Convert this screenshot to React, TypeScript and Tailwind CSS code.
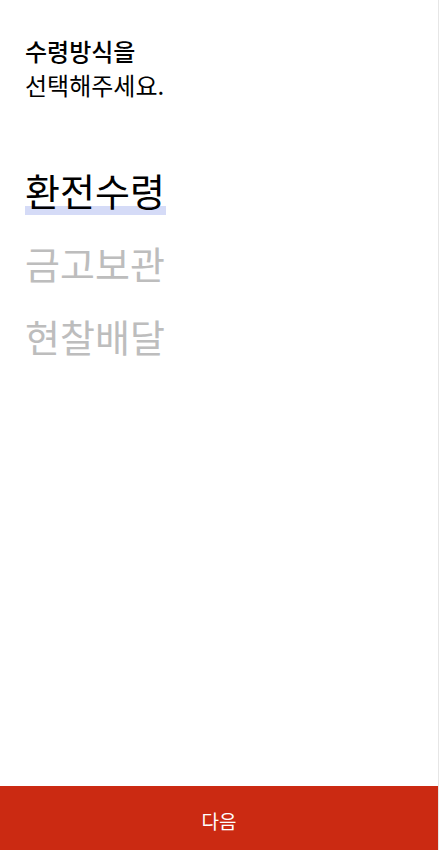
import React from "react";

export default function App() {
  const options = ["환전수령", "금고보관", "현찰배달"];
  return (
    <div
      className="flex h-[850px] w-full flex-col bg-white border-r border-[#e6e6e6]"
      style={{ fontFamily: '"Noto Sans CJK KR", "Noto Sans", sans-serif' }}
    >
      <div className="flex-1 px-[25px] pt-[34px]">
        <h1 className="text-[24px] leading-[34px] text-black">
          <span className="font-medium">수령방식을</span>
          <br />
          <span className="font-normal">선택해주세요.</span>
        </h1>
        <ul className="mt-[63px] flex flex-col gap-[23px]">
          {options.map((o, i) => (
            <li key={o}>
              <span className="relative inline-block text-[38px] leading-[50px]">
                {i === 0 && (
                  <span className="absolute left-0 right-[-1px] bottom-[0px] h-[9px] bg-[#d5dbf7]" />
                )}
                <span className={`relative ${i === 0 ? "text-black" : "text-[#bdbdbd]"}`}>{o}</span>
              </span>
            </li>
          ))}
        </ul>
      </div>
      <button className="h-[64px] w-full bg-[#cb2a12] pt-[7px] text-[19px] text-white">다음</button>
    </div>
  );
}
